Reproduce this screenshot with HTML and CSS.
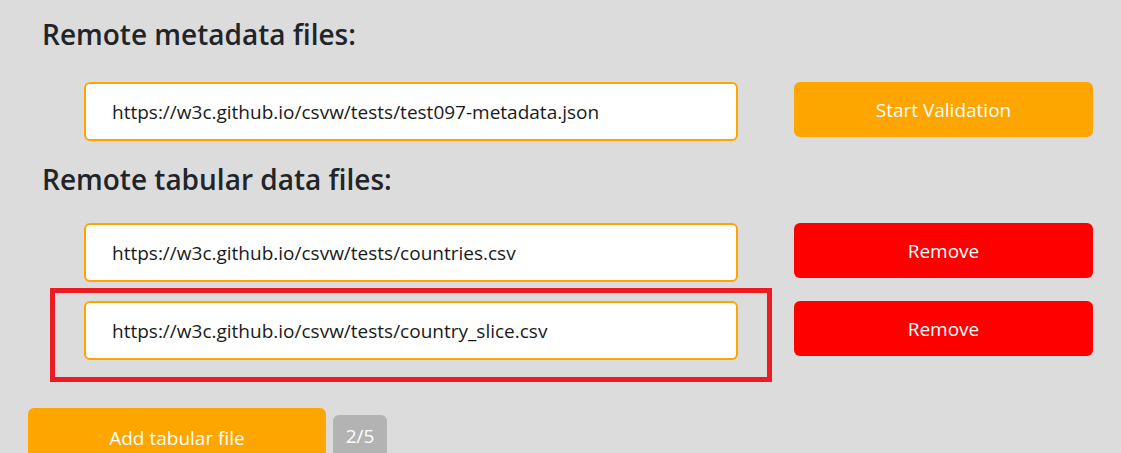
FILE: index.html
```html
<!DOCTYPE html>
<html lang="en">
<head>
<meta charset="utf-8">
<title>Remote files</title>
<link rel="stylesheet" href="styles.css">
</head>
<body>
<main class="page">
  <h3 class="section-title first">Remote metadata files:</h3>
  <div class="file-row">
    <div class="field"><input class="url-input" type="text" value="https://w3c.github.io/csvw/tests/test097-metadata.json"></div>
    <button class="btn btn-orange">Start Validation</button>
  </div>

  <h3 class="section-title second">Remote tabular data files:</h3>
  <div class="file-row">
    <div class="field"><input class="url-input" type="text" value="https://w3c.github.io/csvw/tests/countries.csv"></div>
    <button class="btn btn-red">Remove</button>
  </div>
  <div class="file-row next">
    <div class="field highlighted"><input class="url-input" type="text" value="https://w3c.github.io/csvw/tests/country_slice.csv"></div>
    <button class="btn btn-red">Remove</button>
  </div>

  <div class="add-row">
    <button class="btn btn-orange btn-add">Add tabular file</button>
    <span class="count-badge">2/5</span>
  </div>
</main>
</body>
</html>
```

FILE: styles.css
```css
html, body {
  margin: 0;
  padding: 0;
  background: #dcdcdc;
  height: 100%;
  overflow: hidden;
}

.page {
  font-family: "Open Sans", "Noto Sans", "Liberation Sans", sans-serif;
  color: #212529;
  padding-top: 17px;
}

.section-title {
  margin: 0 0 0 42px;
  font-size: 28px;
  font-weight: 600;
  line-height: 34px;
  color: #212529;
}

.section-title.second {
  margin-top: 21px;
}

.file-row {
  display: flex;
  align-items: flex-start;
  margin-top: 31px;
  margin-left: 84px;
}

.section-title.second + .file-row {
  margin-top: 27px;
}

.file-row.next {
  margin-top: 19px;
}

.field {
  position: relative;
  width: 654px;
  flex: none;
}

.field.highlighted::after {
  content: "";
  position: absolute;
  left: -34px;
  top: -13px;
  right: -34px;
  bottom: -22px;
  border: 5px solid #ed1c24;
  pointer-events: none;
}

.url-input {
  display: block;
  box-sizing: border-box;
  width: 100%;
  height: 59px;
  margin: 0;
  padding: 0 0 0 26px;
  border: 2px solid #ffa500;
  border-radius: 6px;
  background: #ffffff;
  font-family: "Open Sans", "Noto Sans", "Liberation Sans", sans-serif;
  font-size: 19px;
  color: #1a1a1a;
  outline: none;
}

.btn {
  box-sizing: border-box;
  width: 299px;
  height: 55px;
  margin: 0 0 0 56px;
  padding: 0;
  border: none;
  border-radius: 6px;
  font-family: "Open Sans", "Noto Sans", "Liberation Sans", sans-serif;
  font-size: 19px;
  color: #ffffff;
  cursor: pointer;
}

.btn-orange {
  background: #ffa500;
}

.btn-red {
  background: #ff0000;
}

.add-row {
  display: flex;
  align-items: flex-start;
  margin-top: 48px;
  margin-left: 28px;
}

.btn.btn-add {
  margin: 0;
  width: 298px;
  height: 60px;
}

.count-badge {
  box-sizing: border-box;
  margin: 7px 0 0 7px;
  width: 54px;
  height: 50px;
  padding-top: 8px;
  border-radius: 6px;
  background: #b3b3b3;
  color: #ffffff;
  font-size: 19px;
  text-align: center;
}
```
